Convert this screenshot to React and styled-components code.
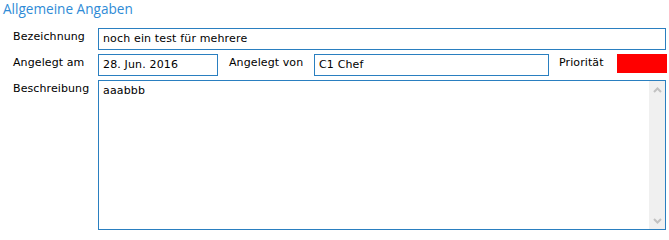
import React from "react";
import styled, { createGlobalStyle } from "styled-components";

const GlobalStyle = createGlobalStyle`
  html, body {
    margin: 0;
    padding: 0;
    background: #ffffff;
  }
`;

const Panel = styled.div`
  width: 669px;
  height: 235px;
  box-sizing: border-box;
  padding: 0 3px 0 3px;
  font-family: "DejaVu Sans", Verdana, sans-serif;
  font-size: 11px;
  color: #000;
`;

const Title = styled.div`
  font-family: "Open Sans", "Segoe UI", sans-serif;
  font-size: 13.6px;
  line-height: 17px;
  color: #2f8bd6;
  height: 28px;
`;

const Form = styled.div`
  display: flex;
  flex-direction: column;
  gap: 4px;
  padding-left: 10px;
`;

const Row = styled.div`
  display: flex;
  align-items: flex-start;
`;

const Label = styled.div`
  width: ${(p) => p.$width}px;
  flex: none;
  padding-top: ${(p) => p.$top || 2}px;
  line-height: 14px;
  white-space: nowrap;
  letter-spacing: 0.1px;
`;

const Field = styled.div`
  box-sizing: border-box;
  height: 22px;
  border: 1px solid #2a7fc0;
  padding: 2px 4px 0 4px;
  line-height: 15px;
  white-space: nowrap;
  overflow: hidden;
  letter-spacing: 0.15px;
  flex: ${(p) => (p.$grow ? "1" : "none")};
  width: ${(p) => (p.$width ? `${p.$width}px` : "auto")};
  margin-right: ${(p) => p.$gap || 0}px;
`;

const Swatch = styled.div`
  width: 50px;
  height: 19px;
  flex: none;
  background: ${(p) => p.$color};
`;

const AreaBox = styled.div`
  flex: 1;
  box-sizing: border-box;
  height: 150px;
  border: 1px solid #2a7fc0;
  display: flex;
`;

const AreaText = styled.div`
  flex: 1;
  padding: 2px 4px;
  line-height: 15px;
  letter-spacing: 0.15px;
`;

const Scrollbar = styled.div`
  width: 16px;
  background: #f0f0f0;
  display: flex;
  flex-direction: column;
  justify-content: space-between;
  align-items: center;
  padding: 6px 0 5px;
`;

const Chevron = ({ down }) => (
  <svg width="9" height="6" viewBox="0 0 9 6">
    <path
      d={down ? "M1 1 L4.5 4.5 L8 1" : "M1 5 L4.5 1.5 L8 5"}
      fill="none"
      stroke="#c2c2c2"
      strokeWidth="2"
    />
  </svg>
);

export default function App() {
  return (
    <>
      <GlobalStyle />
      <Panel>
        <Title>Allgemeine Angaben</Title>
        <Form>
          <Row>
            <Label $width={85}>Bezeichnung</Label>
            <Field $grow>noch ein test für mehrere</Field>
          </Row>
          <Row>
            <Label $width={85}>Angelegt am</Label>
            <Field $width={120} $gap={11}>28. Jun. 2016</Field>
            <Label $width={85}>Angelegt von</Label>
            <Field $width={235} $gap={10}>C1 Chef</Field>
            <Label $width={58}>Priorität</Label>
            <Swatch $color="#ff0000" />
          </Row>
          <Row>
            <Label $width={85}>Beschreibung</Label>
            <AreaBox>
              <AreaText>aaabbb</AreaText>
              <Scrollbar>
                <Chevron />
                <Chevron down />
              </Scrollbar>
            </AreaBox>
          </Row>
        </Form>
      </Panel>
    </>
  );
}
